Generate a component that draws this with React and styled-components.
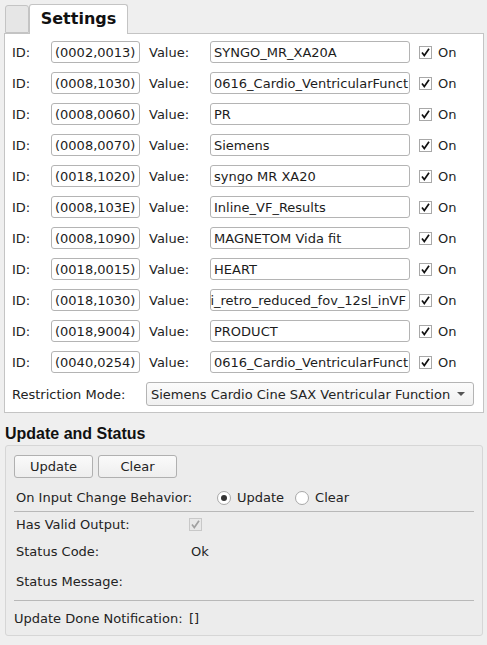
import React from 'react';
import styled, { createGlobalStyle } from 'styled-components';

const GlobalStyle = createGlobalStyle`
  body {
    margin: 0;
    background: #efefef;
    font-family: "DejaVu Sans", "Noto Sans", sans-serif;
    font-size: 13px;
    color: #232323;
  }
`;

const Page = styled.div`
  width: 487px;
  height: 645px;
  box-sizing: border-box;
  padding: 4px 3px 0 4px;
  display: flex;
  flex-direction: column;
`;

const TabBar = styled.div`
  display: flex;
  align-items: flex-end;
  height: 29px;
  position: relative;
  z-index: 1;
`;

const Tab = styled.div`
  box-sizing: border-box;
  height: ${p => (p.active ? '30px' : '28px')};
  width: ${p => p.width}px;
  margin-left: ${p => (p.active ? '0' : '1px')};
  margin-bottom: ${p => (p.active ? '-1px' : '0')};
  border: 1px solid #c4c4c4;
  border-bottom: ${p => (p.active ? 'none' : '1px solid #c4c4c4')};
  border-radius: 3px 3px 0 0;
  background: ${p => (p.active ? '#ffffff' : '#e6e6e6')};
  display: flex;
  align-items: center;
  justify-content: center;
  padding-bottom: 2px;
  font-size: 16px;
  font-weight: bold;
  color: #111;
`;

const Panel = styled.div`
  box-sizing: border-box;
  width: 480px;
  border: 1px solid #c4c4c4;
  background: #ffffff;
  padding: 7px 8px 6px 7px;
  display: flex;
  flex-direction: column;
  gap: 9px;
`;

const Row = styled.div`
  display: flex;
  align-items: center;
  height: ${p => p.height || 22}px;
`;

const Label = styled.div`
  width: ${p => p.width}px;
  margin-left: ${p => p.gap || 0}px;
  flex-shrink: 0;
  white-space: nowrap;
`;

const Field = styled.div`
  box-sizing: border-box;
  width: ${p => p.width}px;
  height: 22px;
  flex-shrink: 0;
  border: 1px solid #b4b4b4;
  border-radius: 3px;
  background: #fff;
  display: flex;
  align-items: center;
  justify-content: ${p => (p.end ? 'flex-end' : 'flex-start')};
  padding: 0 3px;
  overflow: hidden;
  white-space: nowrap;
  color: #1c1c1c;
`;

const CheckBox = styled.span`
  box-sizing: border-box;
  width: 13px;
  height: 13px;
  flex-shrink: 0;
  margin-left: ${p => p.gap || 0}px;
  border: 1px solid ${p => (p.disabled ? '#c8c8c8' : '#a8a8a8')};
  background: ${p => (p.disabled ? '#e8e8e8' : '#fff')};
  display: flex;
  align-items: center;
  justify-content: center;
`;

const CheckText = styled.span`
  margin-left: 6px;
`;

const Combo = styled.div`
  box-sizing: border-box;
  width: 328px;
  height: 24px;
  margin-left: 21px;
  border: 1px solid #b4b4b4;
  border-radius: 3px;
  background: linear-gradient(#fbfbfb, #f0f0f0);
  display: flex;
  align-items: center;
  justify-content: space-between;
  padding: 0 8px 0 4px;
  white-space: nowrap;
`;

const Arrow = styled.span`
  width: 0;
  height: 0;
  border-left: 4px solid transparent;
  border-right: 4px solid transparent;
  border-top: 4px solid #555;
`;

const Heading = styled.div`
  margin: 11px 0 2px 1px;
  height: 19px;
  line-height: 19px;
  font-family: "Liberation Sans", Arial, sans-serif;
  font-weight: bold;
  font-size: 16px;
  color: #111;
`;

const GroupBox = styled.div`
  box-sizing: border-box;
  margin: 0 1px;
  height: 191px;
  border: 1px solid #d6d6d6;
  border-radius: 3px;
  background: #ececec;
  padding: 9px 8px 7px 8px;
  display: flex;
  flex-direction: column;
`;

const ButtonRow = styled.div`
  display: flex;
  gap: 5px;
`;

const Button = styled.div`
  box-sizing: border-box;
  width: 79px;
  height: 23px;
  border: 1px solid #b0b0b0;
  border-radius: 3px;
  background: linear-gradient(#fafafa, #eeeeee);
  display: flex;
  align-items: center;
  justify-content: center;
`;

const StatusRow = styled.div`
  display: flex;
  align-items: center;
  height: 20px;
  margin-top: ${p => p.top || 0}px;
  padding-left: ${p => (p.flush ? 0 : 2)}px;
`;

const StatusLabel = styled.div`
  width: ${p => p.width}px;
  flex-shrink: 0;
  white-space: nowrap;
`;

const Radio = styled.span`
  box-sizing: border-box;
  width: 14px;
  height: 14px;
  border-radius: 50%;
  border: 1px solid #a8a8a8;
  background: #fff;
  margin-left: ${p => p.gap || 0}px;
  display: flex;
  align-items: center;
  justify-content: center;
  &::after {
    content: '';
    display: ${p => (p.checked ? 'block' : 'none')};
    width: 6px;
    height: 6px;
    border-radius: 50%;
    background: #333;
  }
`;

const RadioText = styled.span`
  margin-left: 6px;
`;

const Separator = styled.div`
  height: 1px;
  background: #b8b8b8;
  margin-top: ${p => p.top}px;
`;

const Check = ({ color = '#111' }) => (
  <svg width="11" height="11" viewBox="0 0 11 11">
    <path d="M2 5.5 L4.3 8.5 L9 1.8" fill="none" stroke={color} strokeWidth="1.7" />
  </svg>
);

// values as they show in the fields (long ones are scrolled/clipped there)
const rows = [
  ['(0002,0013)', 'SYNGO_MR_XA20A'],
  ['(0008,1030)', '0616_Cardio_VentricularFunct'],
  ['(0008,0060)', 'PR'],
  ['(0008,0070)', 'Siemens'],
  ['(0018,1020)', 'syngo MR XA20'],
  ['(0008,103E)', 'Inline_VF_Results'],
  ['(0008,1090)', 'MAGNETOM Vida fit'],
  ['(0018,0015)', 'HEART'],
  ['(0018,1030)', 'i_retro_reduced_fov_12sl_inVF', true],
  ['(0018,9004)', 'PRODUCT'],
  ['(0040,0254)', '0616_Cardio_VentricularFunct'],
];

export default function App() {
  return (
    <Page>
      <GlobalStyle />
      <TabBar>
        <Tab width={24} />
        <Tab active width={99}>Settings</Tab>
      </TabBar>
      <Panel>
        {rows.map(([id, value, end]) => (
          <Row key={id}>
            <Label width={39}>ID:</Label>
            <Field width={89}>{id}</Field>
            <Label width={61} gap={9}>Value:</Label>
            <Field width={200} end={end}>{value}</Field>
            <CheckBox gap={9}><Check /></CheckBox>
            <CheckText>On</CheckText>
          </Row>
        ))}
        <Row height={24}>
          <Label width={113}>Restriction Mode:</Label>
          <Combo>
            <span>Siemens Cardio Cine SAX Ventricular Function</span>
            <Arrow />
          </Combo>
        </Row>
      </Panel>
      <Heading>Update and Status</Heading>
      <GroupBox>
        <ButtonRow>
          <Button>Update</Button>
          <Button>Clear</Button>
        </ButtonRow>
        <StatusRow top={10}>
          <StatusLabel width={201}>On Input Change Behavior:</StatusLabel>
          <Radio checked />
          <RadioText>Update</RadioText>
          <Radio gap={11} />
          <RadioText>Clear</RadioText>
        </StatusRow>
        <Separator top={3} />
        <StatusRow top={3}>
          <StatusLabel width={173}>Has Valid Output:</StatusLabel>
          <CheckBox disabled><Check color="#a0a0a0" /></CheckBox>
        </StatusRow>
        <StatusRow top={7}>
          <StatusLabel width={175}>Status Code:</StatusLabel>
          <span>Ok</span>
        </StatusRow>
        <StatusRow top={10}>
          <StatusLabel width={175}>Status Message:</StatusLabel>
        </StatusRow>
        <Separator top={9} />
        <StatusRow top={7} flush>
          <StatusLabel width={175}>Update Done Notification:</StatusLabel>
          <span>[]</span>
        </StatusRow>
      </GroupBox>
    </Page>
  );
}
